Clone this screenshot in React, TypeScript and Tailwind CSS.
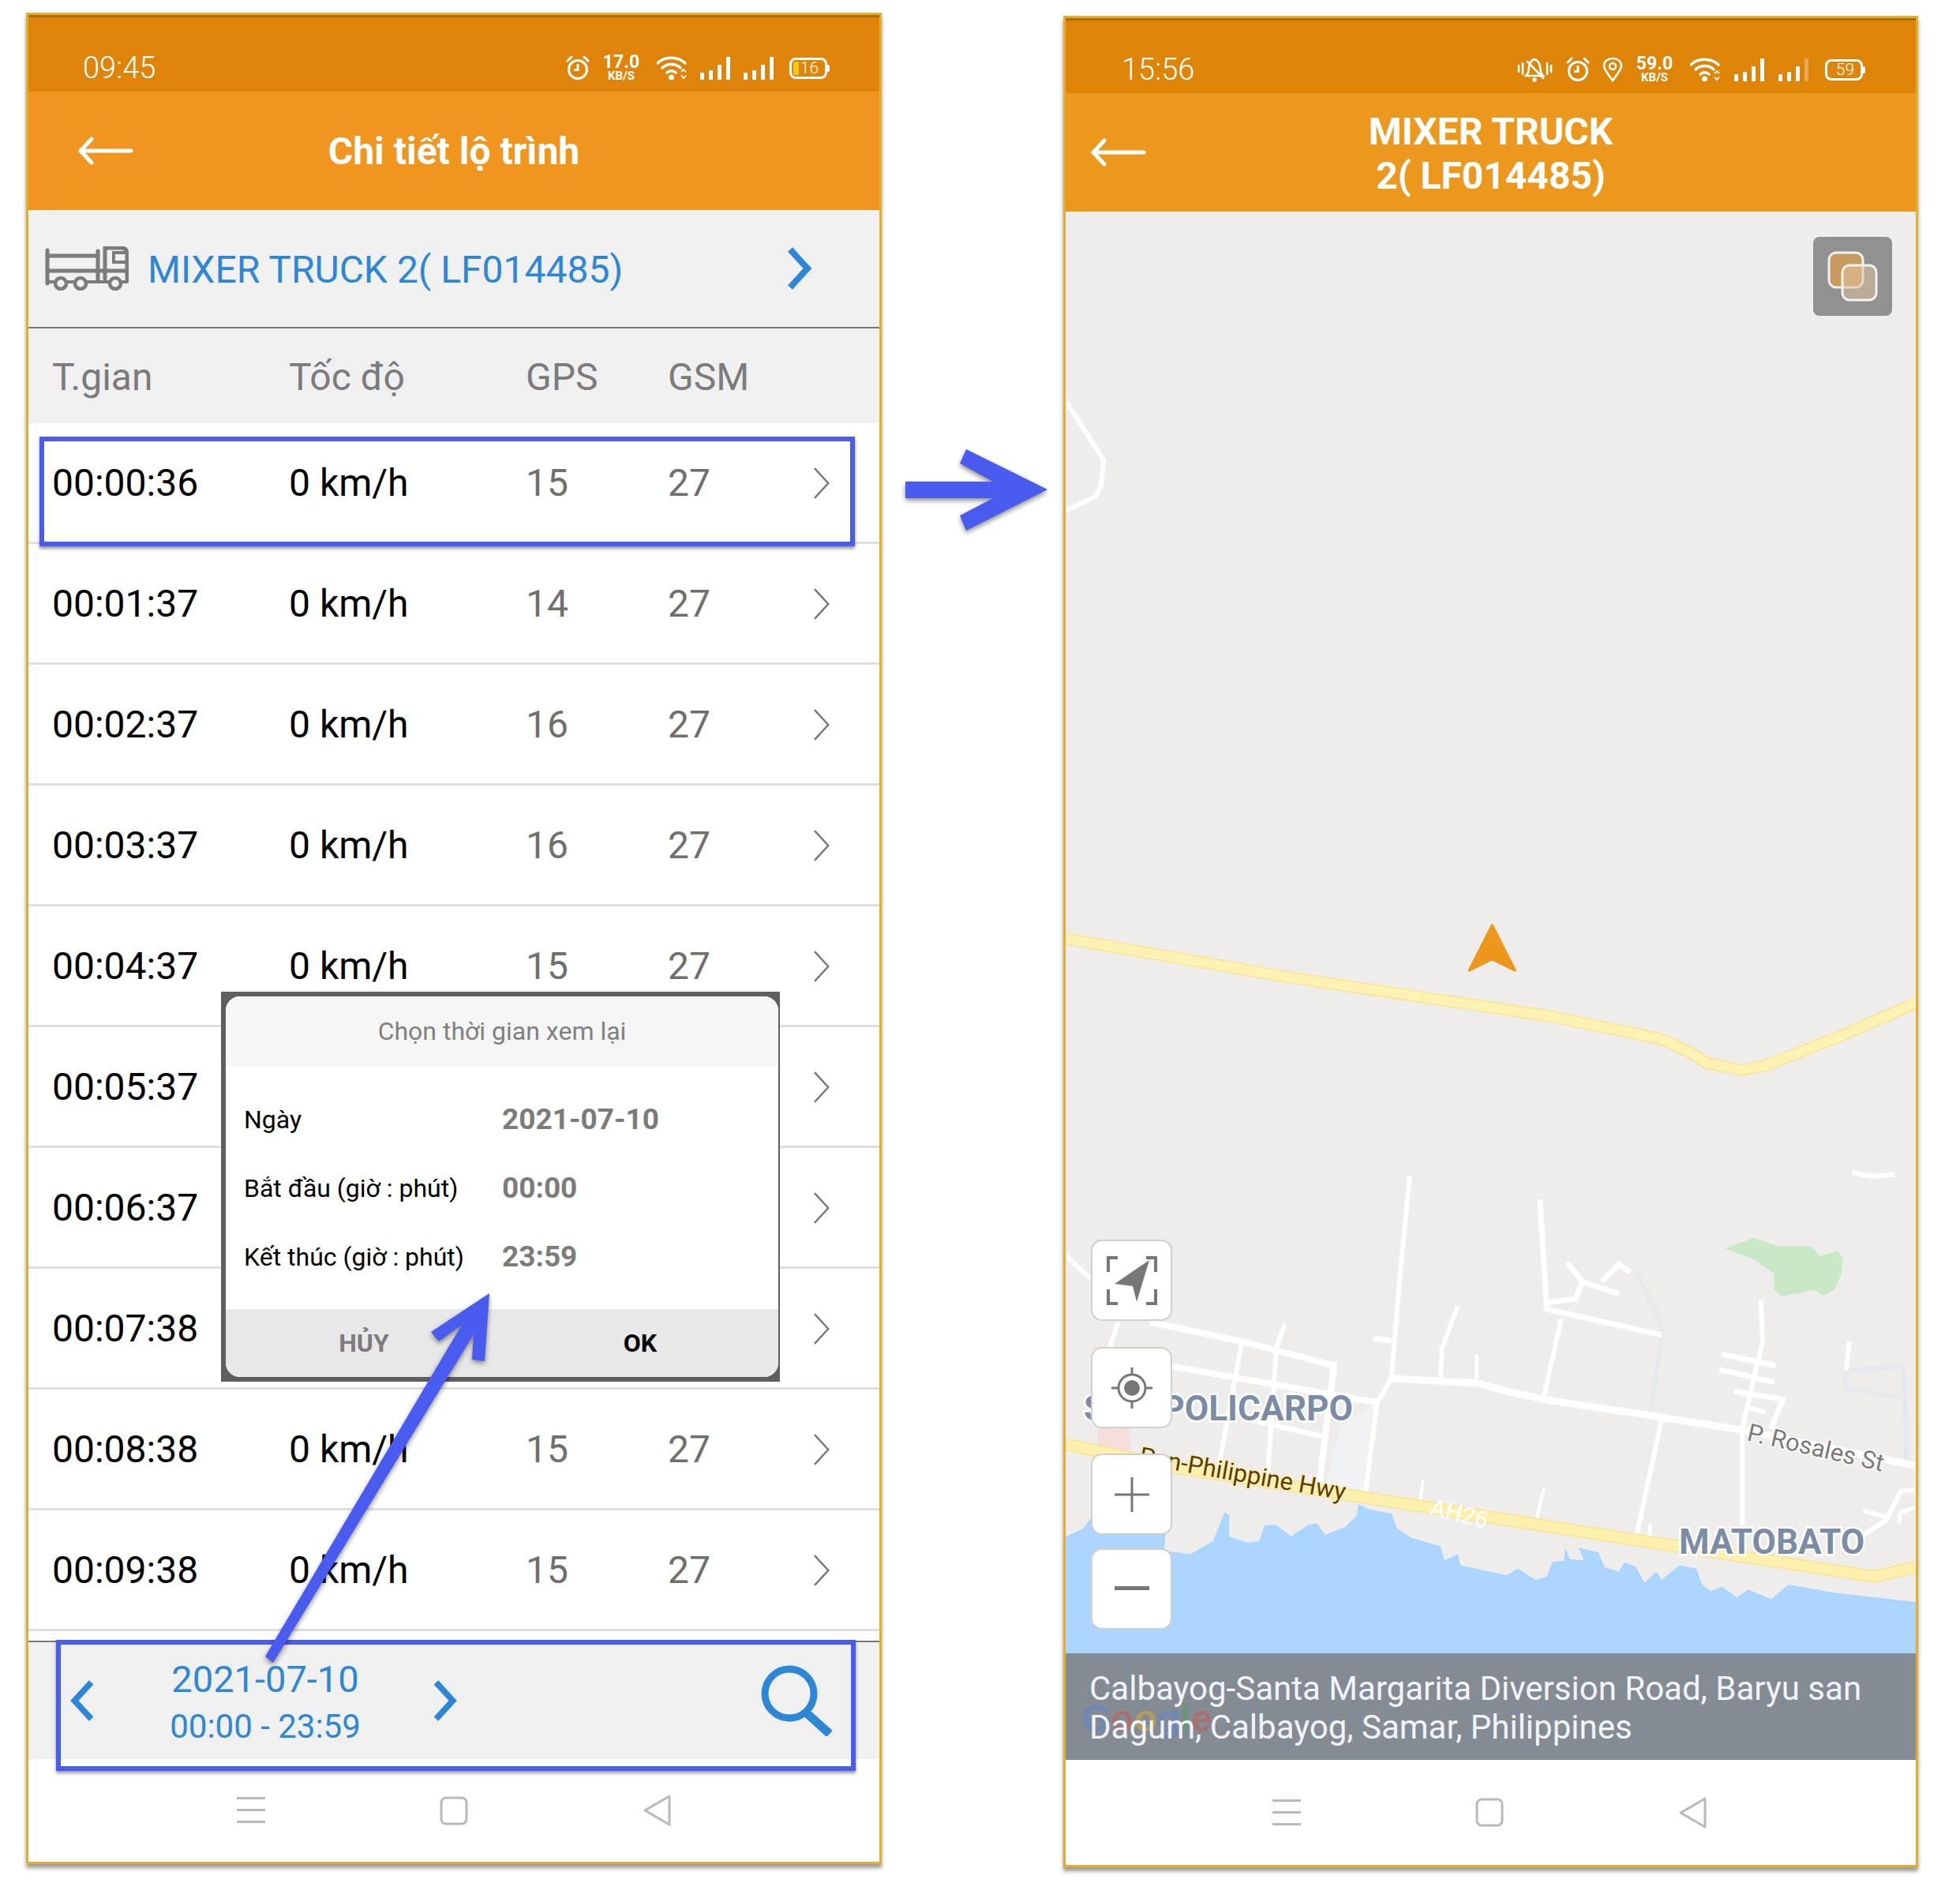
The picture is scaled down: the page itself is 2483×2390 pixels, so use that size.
import React from "react";

const ROWS = [
  ["00:00:36", "15"],
  ["00:01:37", "14"],
  ["00:02:37", "16"],
  ["00:03:37", "16"],
  ["00:04:37", "15"],
  ["00:05:37", "15"],
  ["00:06:37", "15"],
  ["00:07:38", "15"],
  ["00:08:38", "15"],
  ["00:09:38", "15"],
];

// map sits at 1350,268 on the page; traced points come from two crops
const low = (pts: number[][]) =>
  pts.map(([x, y]) => `${(1340 + x / 1.372 - 1350).toFixed(1)},${(1450 + y / 2.45 - 268).toFixed(1)}`).join(" ");
const high = (pts: number[][]) =>
  pts.map(([x, y]) => `${(1340 + x / 1.372 - 1350).toFixed(1)},${(480 + y / 1.742 - 268).toFixed(1)}`).join(" ");

const WHITE_ROADS: [number, number[][]][] = [
  [9, [[580, 725], [730, 740], [780, 765], [845, 790], [1030, 840], [1190, 885], [1490, 995]]],
  [6, [[612, 95], [595, 400], [580, 725], [555, 800], [535, 1080]]],
  [7, [[838, 170], [850, 510], [1050, 590]]],
  [6, [[875, 540], [845, 780]]],
  [7, [[850, 490], [900, 478], [912, 425], [885, 365]]],
  [7, [[912, 425], [975, 462]]],
  [7, [[945, 425], [975, 370], [995, 395]]],
  [6, [[1050, 850], [1005, 1220]]],
  [5, [[1030, 1175], [1028, 1225]]],
  [6, [[1222, 480], [1225, 610], [1190, 880], [1190, 1180]]],
  [7, [[1155, 650], [1248, 685]]],
  [7, [[1150, 697], [1245, 737]]],
  [7, [[1175, 765], [1260, 790], [1240, 880]]],
  [6, [[1200, 815], [1230, 830]]],
  [6, [[1376, 610], [1370, 700]]],
  [6, [[695, 500], [668, 630], [665, 725]]],
  [5, [[728, 650], [728, 725]]],
  [7, [[548, 600], [580, 608]]],
  [6, [[15, 345], [60, 420]]],
  [8, [[160, 550], [320, 610], [480, 685], [455, 1050]]],
  [6, [[395, 555], [380, 630], [365, 1020]]],
  [6, [[320, 610], [280, 1000]]],
  [6, [[105, 550], [90, 630]]],
  [8, [[190, 685], [555, 800]]],
  [7, [[330, 850], [460, 905]]],
  [4, [[635, 1040], [630, 1105]]],
  [4, [[845, 1065], [832, 1165]]],
  [6, [[1490, 1070], [1465, 1075], [1440, 1165], [1400, 1210]]],
  [6, [[1400, 1135], [1440, 1155]]],
  [5, [[1490, 1125], [1465, 1140], [1462, 1175]]],
  [6, [[1380, 85], [1415, 98], [1455, 92]]],
];

const GREY_ROADS: number[][][] = [
  [[1005, 395], [1045, 540], [1050, 590], [1030, 835]],
  [[1370, 700], [1470, 688], [1475, 980]],
  [[1370, 700], [1370, 755], [1470, 785]],
];

const WATER = [
  [15, 1215], [45, 1190], [58, 1155], [190, 1150], [185, 1260], [230, 1270], [270, 1230], [290, 1140], [298, 1150], [298, 1215],
  [330, 1235], [350, 1230], [360, 1180], [380, 1180], [405, 1215], [435, 1180], [450, 1175], [465, 1210], [500, 1185],
  [520, 1150], [522, 1115], [540, 1130], [580, 1145], [590, 1190], [615, 1220], [665, 1245], [672, 1290], [695, 1270],
  [700, 1305], [780, 1335], [800, 1315], [830, 1350], [850, 1340], [860, 1295], [880, 1290], [882, 1250], [890, 1285],
  [915, 1290], [905, 1250], [940, 1265], [950, 1310], [975, 1325], [985, 1295], [1005, 1310], [1020, 1360], [1040, 1325],
  [1050, 1350], [1080, 1305], [1110, 1315], [1120, 1365], [1135, 1385], [1155, 1370], [1180, 1405], [1200, 1380],
  [1240, 1410], [1270, 1365], [1350, 1390], [1500, 1420], [1500, 1600], [0, 1600], [0, 1215],
];

const PARK = [
  [1160, 322], [1210, 288], [1250, 315], [1310, 315], [1325, 345], [1355, 330], [1365, 350], [1362, 400], [1350, 450],
  [1330, 468], [1315, 450], [1285, 462], [1258, 470], [1245, 450], [1245, 400], [1210, 355],
];

function Chevron({ className = "", left = false, color = "#2e86d6", width = 8 }: { className?: string; left?: boolean; color?: string; width?: number }) {
  return (
    <svg viewBox="0 0 33 54" className={className} fill="none">
      <polyline points={left ? "28,3 6,27 28,51" : "5,3 27,27 5,51"} stroke={color} strokeWidth={width} />
    </svg>
  );
}

function BackArrow({ className = "" }: { className?: string }) {
  return (
    <svg viewBox="0 0 70 36" className={className} fill="none" stroke="#fff" strokeWidth="5" strokeLinecap="round" strokeLinejoin="round">
      <path d="M3 18H67" />
      <path d="M17 3L3 18L17 33" />
    </svg>
  );
}

function Alarm({ className = "" }: { className?: string }) {
  return (
    <svg viewBox="0 0 30 32" className={className} fill="none" stroke="#fff" strokeWidth="3">
      <circle cx="15" cy="18" r="11.500" />
      <path d="M15 11V18.500H10" />
      <path d="M2 7L7 2M28 7L23 2" strokeLinecap="round" />
    </svg>
  );
}

function Wifi({ className = "" }: { className?: string }) {
  return (
    <svg viewBox="0 0 40 30" className={className} fill="none" stroke="#fff" strokeWidth="3.400" strokeLinecap="round">
      <path d="M1 9C10 0 26 0 36 9" />
      <path d="M7 15C13 9 24 9 30 15" />
      <path d="M13 21C16 18 21 18 24 21" />
      <circle cx="18.500" cy="27" r="1.800" fill="#fff" />
      <path d="M31.500 19.500L34 17L36.500 19.500M31.500 25L34 28L36.500 25" strokeWidth="1.800" />
    </svg>
  );
}

function Signal({ className = "", faded = false }: { className?: string; faded?: boolean }) {
  return (
    <svg viewBox="0 0 39 30" className={className} fill="#fff">
      <rect x="0" y="21" width="5" height="9" />
      <rect x="11" y="18" width="5" height="12" />
      <rect x="22" y="11" width="5" height="19" />
      <rect x="33" y="1" width="5" height="29" opacity={faded ? 0.3 : 1} />
    </svg>
  );
}

function Battery({ label, fill = false, className = "" }: { label: string; fill?: boolean; className?: string }) {
  return (
    <div className={`relative flex h-[27px] w-[48px] items-center justify-center rounded-[8px] border-[3px] border-white pl-[3px] text-[21px] leading-none font-light text-white ${className}`}>
      {fill && <span className="absolute left-[2px] top-[2px] h-[17px] w-[7px] rounded-[2px] bg-[#f6c81c]" />}
      <span className="relative">{label}</span>
      <span className="absolute right-[-6px] top-[6px] h-[9px] w-[3px] rounded-r-[2px] bg-white" />
    </div>
  );
}

function Speed({ value }: { value: string }) {
  return (
    <div className="flex w-[48px] flex-col items-center text-white">
      <span className="text-[23px] leading-[18px] font-bold">{value}</span>
      <span className="mt-[1px] text-[15px] leading-[14px] font-bold">KB/S</span>
    </div>
  );
}

function NavBar({ className = "" }: { className?: string }) {
  return (
    <div className={`flex flex-1 items-center justify-center gap-[221px] bg-white ${className}`}>
      <svg viewBox="0 0 36 34" className="h-[34px] w-[36px]" fill="#b9b9b9">
        <rect y="0" width="36" height="3" />
        <rect y="15" width="36" height="3" />
        <rect y="30" width="36" height="3" />
      </svg>
      <svg viewBox="0 0 36 37" className="h-[37px] w-[36px]" fill="none" stroke="#b9b9b9" strokeWidth="3">
        <rect x="2" y="2" width="32" height="33" rx="6" />
      </svg>
      <svg viewBox="0 0 37 40" className="h-[40px] w-[37px]" fill="none" stroke="#b9b9b9" strokeWidth="3" strokeLinejoin="round">
        <path d="M34 2V38L3 20Z" />
      </svg>
    </div>
  );
}

function TruckIcon() {
  return (
    <svg viewBox="0 0 106 56" className="h-[56px] w-[106px]" fill="none" stroke="#7b7b7b" strokeLinecap="round">
      <path d="M3 5V47" strokeWidth="5" />
      <path d="M3 12H67M3 31H104" strokeWidth="5" />
      <path d="M67 6V43" strokeWidth="5" />
      <path d="M76 41V2H96Q104 2 104 10V42" strokeWidth="5" />
      <path d="M103 8H87V20H103" strokeWidth="4" />
      <path d="M3 45H104" strokeWidth="4" />
      <circle cx="20" cy="47" r="7" strokeWidth="4.500" fill="#f0f0f0" />
      <circle cx="45" cy="47" r="7" strokeWidth="4.500" fill="#f0f0f0" />
      <circle cx="89" cy="47" r="7" strokeWidth="4.500" fill="#f0f0f0" />
    </svg>
  );
}

function MapButton({ children, className = "" }: { children: React.ReactNode; className?: string }) {
  return (
    <div className={`flex h-[103px] w-[103px] items-center justify-center rounded-[14px] border-2 border-[#cfcfcf] bg-white ${className}`}>
      {children}
    </div>
  );
}

function LeftPhone() {
  return (
    <div className="relative flex h-[2345px] w-[1084px] flex-col border-[3px] border-[#e3ad2d] shadow-[0_5px_5px_rgba(0,0,0,0.4)]">
      <div className="flex h-[97px] items-center justify-between border-t-[3px] border-[#a86c0c] bg-[#e0830a] pt-[34px] pr-[66px] pl-[69px]">
        <span className="text-[38px] font-light text-white">09:45</span>
        <div className="flex items-center">
          <Alarm className="h-[32px] w-[30px]" />
          <div className="ml-[16px]"><Speed value="17.0" /></div>
          <Wifi className="ml-[21px] h-[30px] w-[40px]" />
          <Signal className="ml-[15px] h-[30px] w-[39px]" />
          <Signal className="ml-[16px] h-[30px] w-[39px]" />
          <Battery label="16" fill className="ml-[19px]" />
        </div>
      </div>

      <div className="grid h-[150px] grid-cols-[1fr_auto_1fr] items-center bg-[#f09620]">
        <div className="pl-[63px]">
          <BackArrow className="h-[36px] w-[70px]" />
        </div>
        <h1 className="pt-[2px] text-[48px] font-bold text-white">Chi tiết lộ trình</h1>
      </div>

      <div className="flex h-[150px] items-center border-b-2 border-[#777] bg-[#f0f0f0] pr-[85px] pl-[21px]">
        <TruckIcon />
        <span className="ml-[24px] flex-1 pt-[4px] text-[48px] text-[#2e86d6]">MIXER TRUCK 2( LF014485)</span>
        <Chevron className="h-[54px] w-[33px]" />
      </div>

      <div className="grid h-[120px] grid-cols-[300px_300px_180px_1fr] items-center bg-[#f0f0f0] pt-[3px] pl-[30px] text-[48px] text-[#7b7b7b]">
        <span>T.gian</span>
        <span>Tốc độ</span>
        <span>GPS</span>
        <span>GSM</span>
      </div>

      {ROWS.map(([time, gps]) => (
        <div key={time} className="grid h-[153px] grid-cols-[300px_300px_180px_1fr_auto] items-center border-b-[3px] border-[#e0e0e0] pt-[2px] pr-[60px] pl-[30px] text-[48px]">
          <span className="text-black">{time}</span>
          <span className="text-black">0 km/h</span>
          <span className="text-[#6f6f6f]">{gps}</span>
          <span className="text-[#6f6f6f]">27</span>
          <Chevron className="h-[44px] w-[26px]" color="#777" width={3} />
        </div>
      ))}

      <div className="mt-[12px] flex h-[150px] items-center border-t-2 border-[#777] bg-[#f0f0f0] pr-[60px] pl-[52px]">
        <Chevron left className="h-[52px] w-[33px]" />
        <div className="ml-[94px] flex w-[242px] flex-col items-center pt-[5px] whitespace-nowrap text-[#2e86d6]">
          <span className="text-[47px] leading-[60px]">2021-07-10</span>
          <span className="text-[42px] leading-[60px]">00:00 - 23:59</span>
        </div>
        <Chevron className="ml-[90px] h-[52px] w-[33px]" />
        <svg viewBox="0 0 90 90" className="ml-auto h-[90px] w-[90px]" fill="none" stroke="#2e86d6" strokeWidth="9">
          <circle cx="36" cy="36" r="31" />
          <path d="M57 60L87 87" strokeWidth="11" />
        </svg>
      </div>

      <NavBar />

      {/* date picker dialog */}
      <div className="absolute top-[1237px] left-[244px] h-[494px] w-[708px] bg-[#5f5f5f] pt-[6px] pr-[2px] pb-[6px] pl-[6px]">
        <div className="flex h-full flex-col overflow-hidden rounded-[18px] bg-white">
          <div className="flex h-[88px] items-center justify-center bg-[#f5f5f5] text-[32px] text-[#808080]">
            Chọn thời gian xem lại
          </div>
          <div className="flex-1 pt-[24px] pl-[23px]">
            {[
              ["Ngày", "2021-07-10"],
              ["Bắt đầu (giờ : phút)", "00:00"],
              ["Kết thúc (giờ : phút)", "23:59"],
            ].map(([label, value]) => (
              <div key={label} className="grid h-[87px] grid-cols-[327px_1fr] items-center">
                <span className="text-[32px] text-black">{label}</span>
                <span className="text-[37px] font-bold text-[#7b7b7b]">{value}</span>
              </div>
            ))}
          </div>
          <div className="grid h-[86px] grid-cols-2 bg-[#e8e8e8] text-[32px] font-bold">
            <span className="flex items-center justify-center text-[#7b7b7b]">HỦY</span>
            <span className="flex items-center justify-center text-black">OK</span>
          </div>
        </div>
      </div>

      {/* callout frames */}
      <div className="absolute top-[534px] left-[14px] h-[139px] w-[1033px] border-[6px] border-[#4a5bf0] shadow-[0_3px_4px_rgba(0,0,0,0.4)]" />
      <div className="absolute top-[2058px] left-[35px] h-[166px] w-[1013px] border-[6px] border-[#4a5bf0] shadow-[0_3px_4px_rgba(0,0,0,0.4)]" />
    </div>
  );
}

function RightPhone() {
  return (
    <div className="mt-[4px] flex h-[2345px] w-[1083px] flex-col border-[3px] border-[#e3ad2d] shadow-[0_5px_5px_rgba(0,0,0,0.4)]">
      <div className="flex h-[95px] items-center justify-between border-t-[3px] border-[#a86c0c] bg-[#dd8409] pt-[32px] pr-[67px] pl-[71px]">
        <span className="text-[38px] font-light text-white">15:56</span>
        <div className="flex items-center">
          <svg viewBox="0 0 45 32" className="h-[32px] w-[45px]" fill="none" stroke="#fff" strokeWidth="2.600" strokeLinecap="round">
            <path d="M22 3C16 5 15 10 14 20L11 24H33L30 20C29 10 28 5 22 3Z" />
            <path d="M13 6L33 27" />
            <circle cx="22" cy="29" r="1.500" fill="#fff" />
            <path d="M2 11V19M7 8V22M38 8V22M43 11V19" />
          </svg>
          <Alarm className="ml-[17px] h-[32px] w-[30px]" />
          <svg viewBox="0 0 26 32" className="ml-[16px] h-[32px] w-[26px]" fill="none" stroke="#fff" strokeWidth="2.600">
            <path d="M13 30C6 20 2 16 2 11.500C2 5.500 7 2 13 2C19 2 24 5.500 24 11.500C24 16 20 20 13 30Z" />
            <circle cx="13" cy="12" r="4" />
          </svg>
          <div className="ml-[16px]"><Speed value="59.0" /></div>
          <Wifi className="ml-[21px] h-[30px] w-[40px]" />
          <Signal className="ml-[16px] h-[30px] w-[39px]" />
          <Signal faded className="ml-[17px] h-[30px] w-[39px]" />
          <Battery label="59" className="ml-[20px]" />
        </div>
      </div>

      <div className="grid h-[150px] grid-cols-[1fr_auto_1fr] items-center bg-[#ec981f]">
        <div className="pl-[32px]">
          <BackArrow className="h-[36px] w-[70px]" />
        </div>
        <h1 className="pt-[3px] text-center text-[48px] leading-[56px] font-bold text-white">
          MIXER TRUCK
          <br />
          2( LF014485)
        </h1>
      </div>

      <div className="relative h-[1826px] overflow-hidden bg-[#eeedeb]">
        <svg viewBox="0 0 1077 1826" className="absolute inset-0 h-full w-full" fill="none">
          <polygon points={low(PARK)} fill="#c9e8c6" />
          <polygon points={low([[465, 1060], [490, 880], [550, 800], [535, 1080]])} fill="#f1f2f4" />
          <polygon points={low([[70, 880], [125, 880], [125, 960], [70, 960]])} fill="#f6dfdb" />
          <polygon points={low(WATER)} fill="#acd5fd" />
          {GREY_ROADS.map((pts, i) => (
            <polyline key={i} points={low(pts)} stroke="#e6e8eb" strokeWidth={6} />
          ))}
          {WHITE_ROADS.map(([w, pts], i) => (
            <polyline key={i} points={low(pts)} stroke="#fff" strokeWidth={w} />
          ))}
          <polyline points={high([[15, 50], [40, 100], [80, 180], [75, 235], [65, 260], [15, 290]])} stroke="#fff" strokeWidth={6} />
          <polyline
            points={low([[15, 930], [200, 1000], [500, 1085], [1000, 1225], [1420, 1340], [1490, 1310]])}
            stroke="#f8e48f"
            strokeWidth={16}
          />
          <polyline
            points={low([[15, 930], [200, 1000], [500, 1085], [1000, 1225], [1420, 1340], [1490, 1310]])}
            stroke="#fdf0ae"
            strokeWidth={13}
          />
          <polyline
            points={high([[15, 1235], [400, 1320], [850, 1405], [1045, 1455], [1090, 1480], [1130, 1510], [1190, 1525], [1230, 1515], [1360, 1450], [1490, 1378]])}
            stroke="#f8e48f"
            strokeWidth={15}
          />
          <polyline
            points={high([[15, 1235], [400, 1320], [850, 1405], [1045, 1455], [1090, 1480], [1130, 1510], [1190, 1525], [1230, 1515], [1360, 1450], [1490, 1378]])}
            stroke="#fdf2b4"
            strokeWidth={12}
          />
          <polygon points={high([[755, 1205], [795, 1305], [755, 1280], [715, 1305]])} fill="#ec961c" stroke="#ec961c" strokeWidth={3} strokeLinejoin="round" />

          <g style={{ paintOrder: "stroke" }} stroke="#fff" strokeWidth={5} fontWeight={700} fill="#7d8ca5" fontSize={44}>
            <text x={23} y={1531} textLength={341} lengthAdjust="spacingAndGlyphs">SAN POLICARPO</text>
            <text x={777} y={1700} textLength={235} lengthAdjust="spacingAndGlyphs">MATOBATO</text>
          </g>
          <text transform="translate(92 1586) rotate(10)" fontSize={31} fill="#5c3a00" stroke="#fdf2b4" strokeWidth={3} style={{ paintOrder: "stroke" }}>
            Pan-Philippine Hwy
          </text>
          <text transform="translate(460 1650) rotate(14)" fontSize={30} fill="#fff">AH26</text>
          <text transform="translate(862 1556) rotate(13)" fontSize={31} fill="#7a7a7a" stroke="#fff" strokeWidth={3} style={{ paintOrder: "stroke" }}>
            P. Rosales St
          </text>
        </svg>

        {/* layer switch */}
        <div className="absolute top-[32px] right-[30px] flex h-[100px] w-[100px] items-center justify-center rounded-[8px] bg-[#919191]">
          <svg viewBox="0 0 66 66" className="h-[66px] w-[66px]" strokeWidth="3" stroke="#f2f2f2">
            <rect x="3" y="3" width="43" height="44" rx="9" fill="#c99a5f" />
            <rect x="20" y="19" width="43" height="44" rx="9" fill="#dfc2a0" fillOpacity="0.55" />
          </svg>
        </div>

        {/* map controls */}
        <div className="absolute top-[1302px] left-[32px] flex flex-col">
          <MapButton>
            <svg viewBox="0 0 64 62" className="h-[62px] w-[64px]" fill="none">
              <path d="M14 2H2V20M50 2H62V20M14 60H2V42M50 60H62V42" stroke="#777" strokeWidth="4" />
              <path d="M54 5L10 35L33 38L38 58Z" fill="#777" />
            </svg>
          </MapButton>
          <MapButton className="mt-[33px]">
            <svg viewBox="0 0 52 52" className="h-[52px] w-[52px]" fill="none" stroke="#777" strokeWidth="3">
              <circle cx="26" cy="26" r="17" />
              <circle cx="26" cy="26" r="10" fill="#777" stroke="none" />
              <path d="M26 0V9M26 43V52M0 26H9M43 26H52" />
            </svg>
          </MapButton>
          <MapButton className="mt-[32px]">
            <svg viewBox="0 0 44 44" className="h-[44px] w-[44px]" stroke="#777" strokeWidth="3">
              <path d="M22 0V44M0 22H44" />
            </svg>
          </MapButton>
          <MapButton className="mt-[17px]">
            <svg viewBox="0 0 44 8" className="h-[8px] w-[44px]" fill="#777">
              <rect width="44" height="5" />
            </svg>
          </MapButton>
        </div>
      </div>

      <div className="relative flex h-[135px] flex-col justify-center bg-[#858b93] pt-[3px] pl-[30px] text-[42px] leading-[49px] text-[#f1f5fb]">
        <div className="absolute top-[55px] left-[20px] text-[48px] leading-[56px] font-bold opacity-35 [font-family:'Liberation_Sans',sans-serif]">
          <span className="text-[#4285f4]">G</span>
          <span className="text-[#ea4335]">o</span>
          <span className="text-[#fbbc05]">o</span>
          <span className="text-[#4285f4]">g</span>
          <span className="text-[#34a853]">l</span>
          <span className="text-[#ea4335]">e</span>
        </div>
        <span className="relative">Calbayog-Santa Margarita Diversion Road, Baryu san</span>
        <span className="relative">Dagum, Calbayog, Samar, Philippines</span>
      </div>

      <NavBar className="pr-[2px]" />
    </div>
  );
}

export default function App() {
  return (
    <div className="relative flex h-[2390px] w-[2483px] items-start gap-[230px] bg-white pt-[16px] pl-[33px] [font-family:Roboto,sans-serif]">
      <LeftPhone />
      <RightPhone />

      {/* annotation arrows */}
      <svg viewBox="0 0 2483 2390" className="pointer-events-none absolute inset-0 h-full w-full">
        <g fill="#4a5bf0" className="drop-shadow-[0_3px_3px_rgba(0,0,0,0.45)]">
          <polygon points="620,1638 614,1724 598,1722 600,1690 346,2106 336,2098 585,1678 556,1699 546,1687" />
          <polygon points="1147,610 1258,610 1216,587 1224,569 1327,620 1224,672 1216,653 1258,631 1147,631" />
        </g>
      </svg>
    </div>
  );
}
